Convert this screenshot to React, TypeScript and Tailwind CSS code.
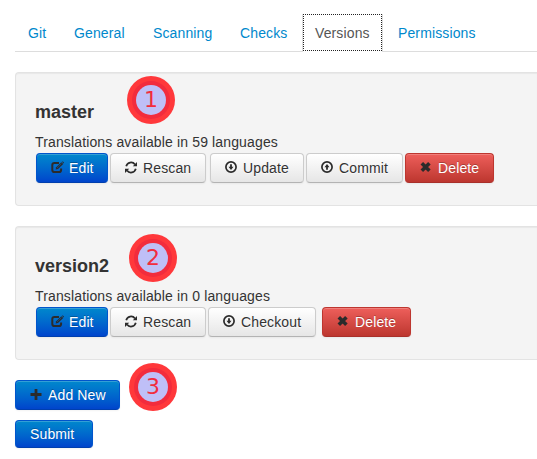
import type { ReactNode } from "react";

type IconName = "edit" | "refresh" | "down" | "up" | "remove" | "plus";

function Icon({ name }: { name: IconName }) {
  return (
    <svg width="14" height="14" viewBox="0 0 14 14" className="shrink-0" fill="none" stroke="#2b2b2b">
      {name === "edit" && (
        <>
          <path d="M8 2H3.4Q1.3 2 1.3 4.1V8.9Q1.3 11 3.4 11H8Q10.1 11 10.1 8.9V7.6" strokeWidth="2" />
          <path d="M4.6 8.6L5.2 6.2L10.4 1.2L12.2 3L7 8Z" fill="#2b2b2b" stroke="none" />
          <path d="M5.9 7L10.4 2.6" stroke="#1565b8" strokeWidth=".5" />
          <path d="M10.9.8Q11.5.2 12.2.8L12.7 1.3Q13.2 1.9 12.6 2.5Z" fill="#2b2b2b" stroke="none" />
        </>
      )}
      {name === "refresh" && (
        <>
          <path d="M1.2 5.2A5 5 0 0 1 10 3.4M10.8 7.8A5 5 0 0 1 2 9.6" strokeWidth="1.7" />
          <path d="M12 1.1V5.3H7.8ZM0 11.9V7.7H4.2Z" fill="#2b2b2b" stroke="none" />
        </>
      )}
      {(name === "down" || name === "up") && (
        <g transform={name === "up" ? "rotate(180 6 6)" : undefined}>
          <circle cx="6" cy="6" r="5.1" strokeWidth="1.7" />
          <path d="M5.1 3.2H6.9V5.8H8.5L6 8.9L3.5 5.8H5.1Z" fill="#2b2b2b" stroke="none" />
        </g>
      )}
      {name === "remove" && <path d="M1.8 2.2L9.4 9.8M9.4 2.2L1.8 9.8" strokeWidth="3.6" />}
      {name === "plus" && <path d="M6 1V12M.5 6.5H11.5" strokeWidth="2.8" />}
    </svg>
  );
}

const variants = {
  primary:
    "border-[#0055cc] border-b-[#003fae] bg-linear-to-b from-[#0088cc] to-[#0044cc] text-white [text-shadow:0_-1px_0_rgba(0,0,0,0.25)]",
  plain:
    "border-[#cccccc] border-b-[#b3b3b3] bg-linear-to-b from-white to-[#e6e6e6] text-[#333333] [text-shadow:0_1px_1px_rgba(255,255,255,0.75)]",
  danger:
    "border-[#bd362f] border-b-[#a9302a] bg-linear-to-b from-[#ee5f5b] to-[#bd362f] text-white [text-shadow:0_-1px_0_rgba(0,0,0,0.25)]",
};

function Button({
  kind = "plain",
  icon,
  className,
  children,
}: {
  kind?: keyof typeof variants;
  icon?: IconName;
  className: string;
  children: ReactNode;
}) {
  return (
    <button
      className={`flex shrink-0 items-center whitespace-nowrap rounded-[4px] border pl-3.5 text-[14px] leading-5 tracking-[0.13px] shadow-[inset_0_1px_0_rgba(255,255,255,0.2),0_1px_2px_rgba(0,0,0,0.05)] ${variants[kind]} ${className}`}
    >
      {icon && (
        <span className="mr-1">
          <Icon name={icon} />
        </span>
      )}
      {children}
    </button>
  );
}

function Marker({ n, className }: { n: number; className: string }) {
  return (
    <span
      className={`absolute flex size-12 items-center justify-center rounded-full bg-[#ff383b] ${className}`}
    >
      <span className="flex size-[38px] items-center justify-center rounded-full bg-[#f22c3d]">
        <span className="flex size-[30px] items-center justify-center rounded-full bg-[#bfbff7] font-['DejaVu_Sans',sans-serif] text-[22px] leading-none text-[#f22c3d]">
          {n}
        </span>
      </span>
    </span>
  );
}

function Version({
  name,
  count,
  marker,
  children,
}: {
  name: string;
  count: number;
  marker: ReactNode;
  children: ReactNode;
}) {
  return (
    <section className="relative mb-5 h-[134px] rounded-l-[4px] border border-r-0 border-[#e3e3e3] bg-[#f4f4f4] pl-[19px] pt-[29px] shadow-[inset_0_1px_1px_rgba(0,0,0,0.05)]">
      <h4 className="text-[18px] font-bold leading-5">{name}</h4>
      <p className="mt-2.5 text-[14px] leading-5 tracking-[0.14px]">
        Translations available in {count} languages
      </p>
      <div className="ml-px mt-px flex">{children}</div>
      {marker}
    </section>
  );
}

const tabs = [
  { label: "Git", width: "w-[46px]" },
  { label: "General", width: "w-[79px]" },
  { label: "Scanning", width: "w-[87px]" },
  { label: "Checks", width: "w-[76px]" },
  { label: "Versions", width: "w-[81px]" },
  { label: "Permissions", width: "w-[110px]" },
];

export default function App() {
  return (
    <main className="h-[459px] w-[537px] overflow-hidden bg-white pl-[15px] pt-3.5 font-['Liberation_Sans',Arial,sans-serif] text-[14px] text-[#333333]">
      <nav className="flex h-[38px] border-b border-[#dddddd]">
        {tabs.map(({ label, width }) => (
          <a
            key={label}
            className={`relative h-[38px] shrink-0 whitespace-nowrap pt-[9px] leading-5 tracking-[0.12px] ${width} ${
              label === "Versions"
                ? "-ml-px mr-0.5 border-x border-[#dddddd] bg-white pl-3 text-[#555555]"
                : "pl-[13px] text-[#0088cc]"
            }`}
          >
            {label}
            {label === "Versions" && (
              <span className="absolute inset-x-0 top-0 h-[37px] border border-dotted border-[#222222]" />
            )}
          </a>
        ))}
      </nav>
      <div className="mt-5">
        <Version name="master" count={59} marker={<Marker n={1} className="left-[111px] top-[3px]" />}>
          <Button kind="primary" icon="edit" className="h-[30px] w-[72px]">Edit</Button>
          <Button icon="refresh" className="ml-0.5 h-[30px] w-24">Rescan</Button>
          <Button icon="down" className="ml-1 h-[30px] w-[94px]">Update</Button>
          <Button icon="up" className="ml-0.5 h-[30px] w-[97px]">Commit</Button>
          <Button kind="danger" icon="remove" className="ml-0.5 h-[30px] w-[89px]">Delete</Button>
        </Version>
        <Version name="version2" count={0} marker={<Marker n={2} className="left-[113px] top-[7px]" />}>
          <Button kind="primary" icon="edit" className="h-[30px] w-[72px]">Edit</Button>
          <Button icon="refresh" className="ml-0.5 h-[30px] w-24">Rescan</Button>
          <Button icon="down" className="ml-0.5 h-[30px] w-[108px]">Checkout</Button>
          <Button kind="danger" icon="remove" className="ml-1.5 h-[30px] w-[89px]">Delete</Button>
        </Version>
      </div>
      <div className="relative">
        <Button kind="primary" icon="plus" className="h-[30px] w-[105px]">Add New</Button>
        <Marker n={3} className="left-[114px] top-[-17px]" />
      </div>
      <Button kind="primary" className="mt-2.5 h-7 w-[78px]">Submit</Button>
    </main>
  );
}
